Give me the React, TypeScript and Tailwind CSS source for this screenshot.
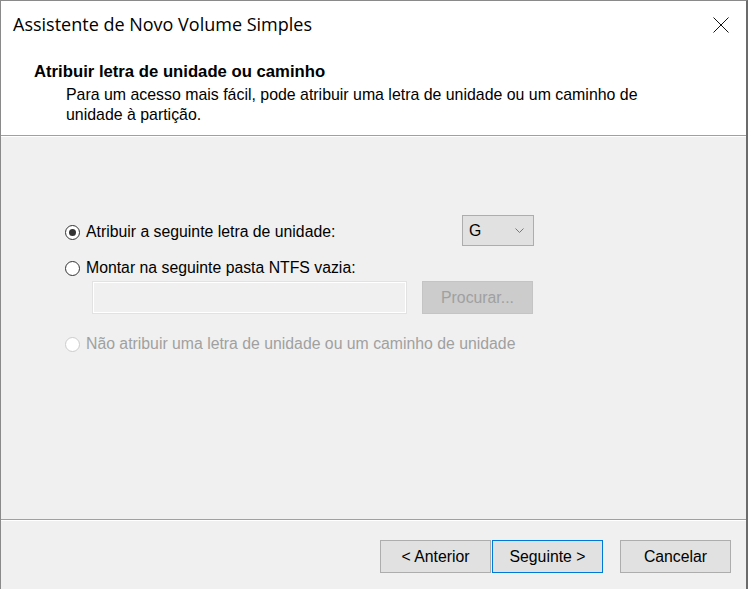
import React from "react";

const ui = { fontFamily: '"Liberation Sans", Arial, sans-serif' };
const titleFont = { fontFamily: '"Segoe UI", "Open Sans", "Noto Sans", sans-serif' };

function Radio({ checked, disabled }: { checked?: boolean; disabled?: boolean }) {
  return (
    <span
      className={`flex h-[15px] w-[15px] shrink-0 items-center justify-center rounded-full border bg-white ${
        disabled ? "border-[#cccccc] bg-[#f3f3f3]" : "border-[#333333]"
      }`}
    >
      {checked && <span className="h-[7px] w-[7px] rounded-full bg-[#333333]" />}
    </span>
  );
}

function Button({ label, focused }: { label: string; focused?: boolean }) {
  return (
    <button
      className={`flex h-[33px] w-[111px] items-center justify-center border bg-[#e1e1e1] text-[15.8px] text-black ${
        focused ? "border-[#0078d7]" : "border-[#adadad]"
      }`}
    >
      {label}
    </button>
  );
}

export default function App() {
  return (
    <div
      className="flex h-[589px] w-[748px] flex-col overflow-hidden border-l border-t border-r-2 border-l-[#8a8a8a] border-t-[#8a8a8a] border-r-[#6b6b6b] bg-[#f0f0f0]"
      style={ui}
    >
      {/* cabeçalho branco */}
      <div className="flex flex-col bg-white">
        <div className="flex h-[48px] items-center justify-between pl-[12px] pr-[17px]">
          <span className="-mt-[1px] text-[18px] text-black" style={titleFont}>
            Assistente de Novo Volume Simples
          </span>
          <svg width="16" height="16" viewBox="0 0 16 16">
            <path d="M0.5 0.5 L15.5 15.5 M15.5 0.5 L0.5 15.5" stroke="#111" strokeWidth="1" />
          </svg>
        </div>
        <div className="h-[86px] pl-[33px] pt-[13px]">
          <div className="text-[16.7px] font-bold leading-[20px] text-black">
            Atribuir letra de unidade ou caminho
          </div>
          <p className="mt-[3px] pl-[32px] text-[15.9px] leading-[20px] text-black">
            Para um acesso mais fácil, pode atribuir uma letra de unidade ou um caminho de
            <br />
            unidade à partição.
          </p>
        </div>
      </div>
      <div className="h-px bg-[#a0a0a0]" />
      <div className="h-px bg-white" />

      {/* corpo */}
      <div className="flex-1 pl-[64px] pt-[78px]">
        <div className="flex w-[469px] items-center justify-between">
          <label className="mt-[3px] flex items-center gap-[6px] text-[15.8px] text-black">
            <Radio checked />
            Atribuir a seguinte letra de unidade:
          </label>
          <div className="flex h-[31px] w-[72px] items-center justify-between border border-[#adadad] bg-[#e1e1e1] pl-[6px] pr-[9px] text-[15.8px] text-black">
            <span>G</span>
            <svg width="9" height="5" viewBox="0 0 9 5">
              <path d="M0.5 0.5 L4.5 4.5 L8.5 0.5" fill="none" stroke="#777" strokeWidth="1" />
            </svg>
          </div>
        </div>
        <label className="mt-[12px] flex h-[20px] items-center gap-[6px] text-[15.8px] text-black">
          <Radio />
          Montar na seguinte pasta NTFS vazia:
        </label>
        <div className="mt-[3px] flex items-center gap-[15px] pl-[27px]">
          <div className="h-[33px] w-[315px] border border-[#e2e2e2] bg-[#f0f0f0] shadow-[inset_0_0_0_1px_#ffffff]" />
          <button className="flex h-[33px] w-[111px] items-center justify-center border border-[#c4c4c4] bg-[#cccccc] text-[15.8px] text-[#a0a0a0]">
            Procurar...
          </button>
        </div>
        <label className="mt-[20px] flex h-[20px] items-center gap-[6px] text-[15.8px] text-[#a0a0a0]">
          <Radio disabled />
          Não atribuir uma letra de unidade ou um caminho de unidade
        </label>
      </div>

      {/* rodapé */}
      <div className="h-px bg-[#a0a0a0]" />
      <div className="h-px bg-white" />
      <div className="flex h-[68px] items-start pl-[379px] pt-[19px]">
        <Button label="< Anterior" />
        <div className="ml-[1px]">
          <Button label="Seguinte >" focused />
        </div>
        <div className="ml-[17px]">
          <Button label="Cancelar" />
        </div>
      </div>
    </div>
  );
}
